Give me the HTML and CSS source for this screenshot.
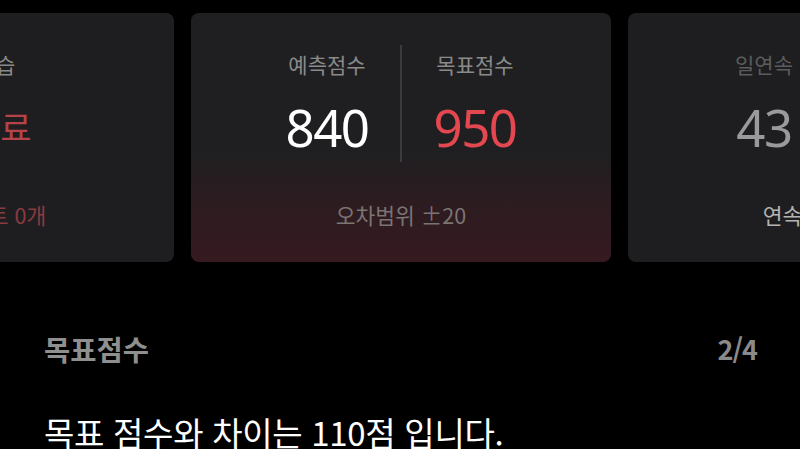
FILE: index.html
```html
<!DOCTYPE html>
<html lang="ko">
<head>
<meta charset="utf-8">
<link rel="stylesheet" href="styles.css">
</head>
<body>
<div class="track">
  <div class="card">
    <div class="single">
      <div class="label">오늘의 학습</div>
      <div class="big red-dim">학습완료</div>
    </div>
    <div class="foot red-foot">남은 퀘스트 0개</div>
  </div>
  <div class="card card-hl">
    <div class="stats">
      <div class="col">
        <div class="label">예측점수</div>
        <div class="num">840</div>
      </div>
      <div class="divider"></div>
      <div class="col">
        <div class="label">목표점수</div>
        <div class="num red">950</div>
      </div>
    </div>
    <div class="foot">오차범위 ±20</div>
  </div>
  <div class="card">
    <div class="stats">
      <div class="col">
        <div class="label dim">일연속</div>
        <div class="num gray">43</div>
      </div>
      <div class="divider none"></div>
      <div class="col">
        <div class="label dim">최고기록</div>
        <div class="num gray">50</div>
      </div>
    </div>
    <div class="foot light">연속 학습 달성중</div>
  </div>
</div>
<section class="info">
  <div class="info-head">
    <h2 class="info-title">목표점수</h2>
    <span class="info-page">2/4</span>
  </div>
  <p class="info-text">목표 점수와 차이는 110점 입니다.</p>
</section>
</body>
</html>
```
FILE: styles.css
```css
html, body {
  margin: 0;
  padding: 0;
  background: #000;
  height: 449px;
  overflow: hidden;
}
body {
  font-family: "Noto Sans CJK KR", "Noto Sans", sans-serif;
  color: #fff;
}
.track {
  display: flex;
  gap: 17px;
  margin-left: -246px;
  padding-top: 13px;
  width: 1400px;
}
.card {
  flex: 0 0 420px;
  height: 249px;
  border-radius: 8px;
  background: #1e1e20;
  display: flex;
  flex-direction: column;
  box-sizing: border-box;
}
.card-hl {
  background: linear-gradient(to bottom, #1f1f21 0%, #1f1f21 56%, #2a1c20 72%, #361a20 100%);
}
.stats {
  display: flex;
  justify-content: center;
  margin-top: 32px;
  height: 117px;
}
.single {
  margin-top: 32px;
  height: 117px;
  display: flex;
  flex-direction: column;
  align-items: center;
}
.col {
  width: 146px;
  display: flex;
  flex-direction: column;
  align-items: center;
  padding-top: 5px;
}
.single .label {
  padding-top: 5px;
}
.divider {
  width: 2px;
  background: #3b3b3d;
}
.divider.none {
  background: #2a2a2c;
}
.label {
  font-size: 21px;
  line-height: 28px;
  color: #8a8a8a;
  white-space: nowrap;
}
.label.dim {
  color: #5c5c5e;
}
.num {
  margin-top: 21px;
  font-family: "Noto Sans", sans-serif;
  font-weight: 400;
  font-size: 51px;
  line-height: 56px;
  letter-spacing: -1.5px;
  color: #fff;
}
.num.red { color: #e3474f; }
.num.gray { color: #9a9a9c; }
.big {
  margin-top: 21px;
  margin-left: 10px;
  font-size: 34px;
  line-height: 56px;
  white-space: nowrap;
}
.red-dim { color: #b4434a; }
.foot {
  margin-top: auto;
  margin-bottom: 34px;
  text-align: center;
  font-size: 21.5px;
  line-height: 26px;
  color: #7c7373;
  white-space: nowrap;
}
.red-foot {
  color: #8a3b40;
  margin-left: 22px;
}
.foot.light { color: #b4b4b4; }
.info {
  padding: 0 43px 0 44px;
  margin-top: 68px;
}
.info-head {
  display: flex;
  justify-content: space-between;
  align-items: center;
  height: 36px;
}
.info-title {
  margin: 0;
  font-size: 28.5px;
  font-weight: 700;
  color: #8f8f8f;
}
.info-page {
  font-size: 27px;
  font-weight: 700;
  color: #8a8a8a;
  letter-spacing: -1px;
}
.info-text {
  margin: 46px 0 0;
  font-size: 33px;
  line-height: 40px;
  color: #fff;
  letter-spacing: -0.3px;
  white-space: nowrap;
}
```
